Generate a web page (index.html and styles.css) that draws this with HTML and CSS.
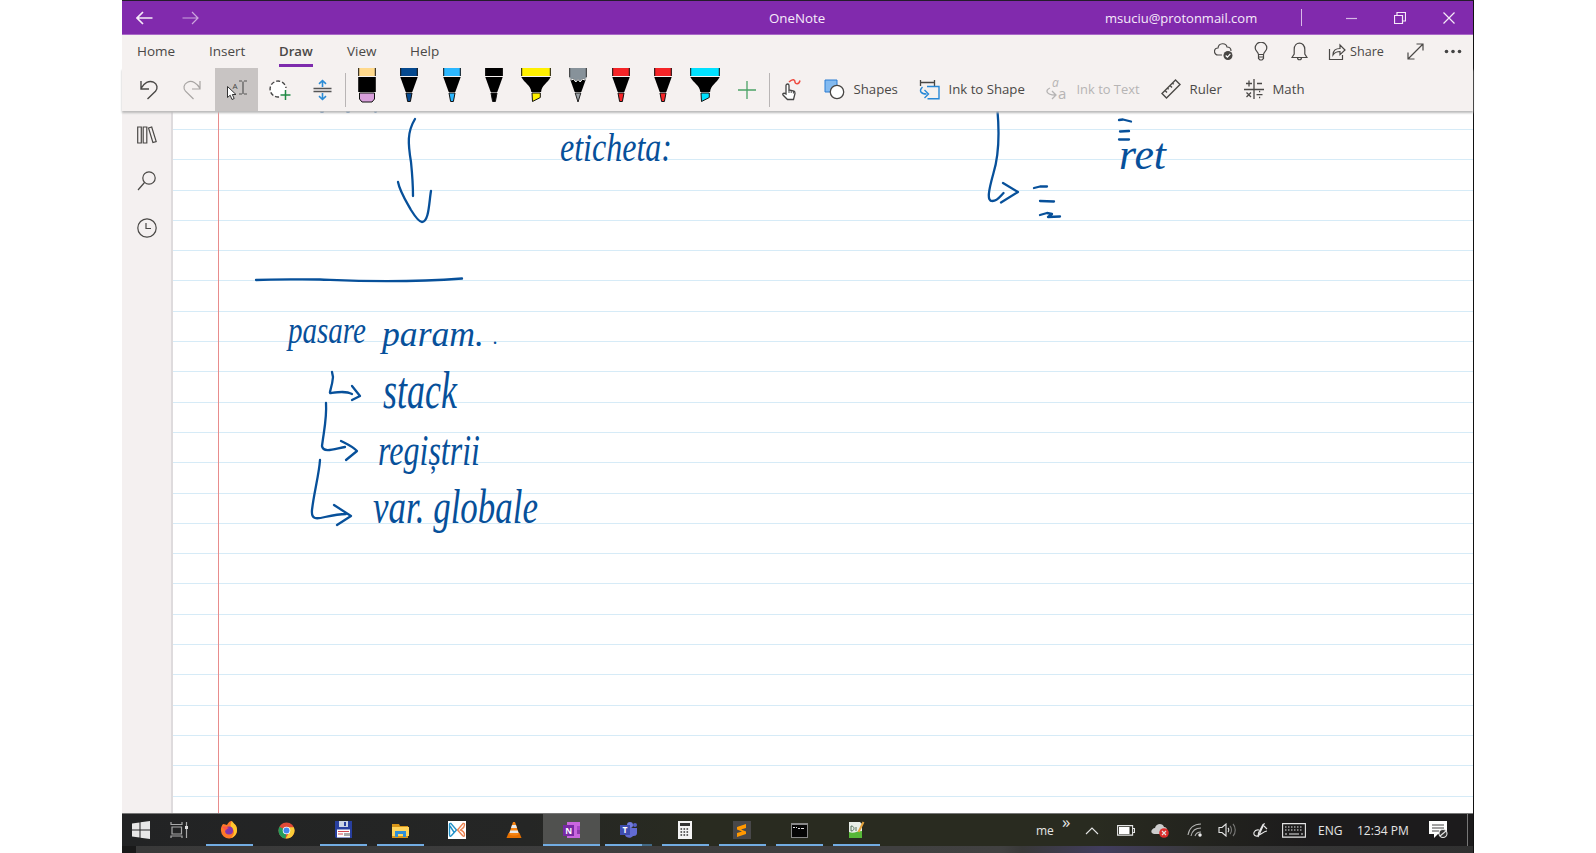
FILE: index.html
```html
<!DOCTYPE html>
<html lang="en">
<head>
<meta charset="utf-8">
<title>OneNote</title>
<link rel="stylesheet" href="styles.css">
</head>
<body>
<svg class="defs" width="0" height="0">
  <symbol id="pen" viewBox="0 0 18 35">
    <path d="M.3 0h17.4v8H.3z" fill="currentColor"/><path d="M.7 0v8M17.3 0v8" stroke="#111"/>
    <path d="M.3 9h17.4l-5.4 15H5.7z" fill="#000"/>
    <path d="M6 25h6l-1.6 8.5H7.6z" fill="currentColor" stroke="#111"/>
  </symbol>
  <symbol id="marker" viewBox="0 0 30 35">
    <path d="M.3 0h29.4v8H.3z" fill="currentColor"/><path d="M.7 0v8M29.3 0v8" stroke="#111"/>
    <path d="M.3 9h29.4c-3 6-9 8-9.600 15h-9.800C9.700 17 3.300 15 .3 9z" fill="#000"/>
    <path d="M11 25h8.300v4.500L11.500 33.500z" fill="currentColor" stroke="#111"/>
  </symbol>
</svg>
<div class="window">
  <header class="titlebar">
    <svg class="back" width="17" height="14" viewBox="0 0 17 14"><path d="M16.500 7H1M7 1 1 7l6 6"/></svg>
    <svg class="forward" width="17" height="14" viewBox="0 0 17 14"><path d="M.5 7H16M10 1l6 6-6 6"/></svg>
    <span class="app-name">OneNote</span>
    <span class="account">msuciu@protonmail.com</span>
    <i class="title-sep"></i>
    <svg class="minimise" width="11" height="12" viewBox="0 0 11 12"><path d="M0 6.500h11"/></svg>
    <svg class="restore" width="12" height="12" viewBox="0 0 12 12"><path d="M.5 3.500h8v8h-8zM3 3.500v-3h8.500V9h-3"/></svg>
    <svg class="close" width="12" height="12" viewBox="0 0 12 12"><path d="m.5.5 11 11m0-11-11 11"/></svg>
  </header>

  <nav class="tabs">
    <span class="tab home">Home</span>
    <span class="tab insert">Insert</span>
    <span class="tab draw">Draw</span>
    <span class="tab view">View</span>
    <span class="tab help">Help</span>
    <div class="tab-actions">
      <svg class="line sync" width="20" height="18" viewBox="0 0 20 18"><path d="M8 12H4a3.500 3.500 0 0 1 0-7c.7-5.500 8-5.500 9-1 3 0 4 1.500 4 4"/><circle cx="14" cy="12.500" r="4.500" fill="#484644" stroke="none"/><path d="m11.700 12.500 1.700 1.700 3-3.400" stroke="#fff"/></svg>
      <svg class="line bulb" width="14" height="19" viewBox="0 0 14 19"><path d="M4.500 12.500C4 9.500 1.200 9 1.200 6a5.500 5.500 0 0 1 11.600 0c0 3-2.800 3.500-3.300 6.500zM4.500 12.500v4l1.500 1.500h2l1.500-1.500v-4M4.500 15h5"/></svg>
      <svg class="line bell" width="17" height="19" viewBox="0 0 17 19"><path d="M1 15.500h15l-2.200-3.500V7.500c0-8.500-10.600-8.500-10.600 0V12zM6.500 15.500c0 3 4 3 4 0"/></svg>
      <svg class="line share" width="18" height="18" viewBox="0 0 18 18"><path d="M1.500 6v10.500h13V12M5 12c0-5 3-6.500 7-6.500V2l5 5-5 4.700V8.500c-3 0-5 .5-7 3.500z"/></svg>
      <span class="share-label">Share</span>
      <svg class="line expand" width="17" height="17" viewBox="0 0 17 17"><path d="m1 16 15-15M9.500 1H16v6.500M1 9.500V16h6.500"/></svg>
      <svg class="more" width="18" height="5" viewBox="0 0 18 5"><circle cx="2.500" cy="2.500" r="1.800"/><circle cx="9" cy="2.500" r="1.800"/><circle cx="15.500" cy="2.500" r="1.800"/></svg>
    </div>
  </nav>

  <div class="toolbar">
    <div class="tool edit"><svg class="line" width="20" height="22" viewBox="0 0 20 22"><path stroke-width="1.400" d="M2 2v8h8M2 9.500C5 4 10 1 14.500 3.200c4 2 4.500 6 2 9L8.500 20"/></svg></div>
    <div class="tool edit redo"><svg class="line" width="20" height="22" viewBox="0 0 20 22"><path d="M18 2v8h-8M18 9.500C15 4 10 1 5.500 3.200c-4 2-4.500 6-2 9L11.500 20"/></svg></div>
    <div class="tool select"><svg width="24" height="24" viewBox="0 0 24 24"><path d="M14 3h3m2 0h3M18 3.500v12.500M14 16h3m2 0h3" stroke="#555" stroke-width="1.200" fill="none"/><text x="7.500" y="11" font-size="8" fill="#444">A</text><path d="M2.500 8.500v11l2.700-2.300 1.800 4.300 2.200-1-1.900-4h3.700z" fill="#fff" stroke="#333"/></svg></div>
    <div class="tool edit"><svg width="22" height="22" viewBox="0 0 22 22"><circle cx="9" cy="10" r="7.800" fill="#fff"/><path d="M10 18a8 8 0 1 1 7-9" fill="none" stroke="#444" stroke-width="1.400" stroke-dasharray="4 2"/><path d="M16.500 11v10M11.500 16h10" stroke="#218a45" stroke-width="1.500"/></svg></div>
    <div class="tool edit"><svg width="19" height="22" viewBox="0 0 19 22"><path d="M.5 9.500h18M.5 12.500h18" stroke="#555" stroke-width="1.500"/><path d="M9.500 8V2M6 4.800 9.500 1.500 13 4.800M9.500 14v6M6 17.200l3.500 3.300 3.500-3.300" stroke="#2c8cd6" stroke-width="1.600" fill="none"/></svg></div>
    <i class="sep"></i>
    <div class="tool pen"><svg width="18" height="35" viewBox="0 0 18 35"><path d="M0 0h18v8H0z" fill="#ffd98c"/><path d="M.7 0v8M17.300 0v8" stroke="#111"/><path d="M.2 9h17.600v15H.2z"/><path d="M1.500 25h15v6l-2.500 3H4l-2.500-3z" fill="#d9a0dc" stroke="#111"/></svg></div>
    <div class="tool pen navy"><svg width="18" height="35"><use href="#pen"/></svg></div>
    <div class="tool pen sky"><svg width="18" height="35"><use href="#pen"/></svg></div>
    <div class="tool pen black"><svg width="18" height="35"><use href="#pen"/></svg></div>
    <div class="tool pen yellow"><svg width="30" height="35"><use href="#marker"/></svg></div>
    <div class="tool pen"><svg width="18" height="35" viewBox="0 0 18 35"><path d="M.3 9h17.400l-5.400 15H5.700z"/><path d="M.3 0h17.400v9l-2 2.500-2.200-1-2.300 3-2.200-2.500-2.200 2.500-2.200-3-2.200 1L.3 9z" fill="#87929a"/><path d="M.3 9.500 2.300 12l2.200-1 2.300 3L9 11.500l2.200 2.500 2.300-3 2.200 1 2-2.500" fill="none" stroke="#fff"/><path d="M.7 0v9M17.300 0v9" stroke="#333"/><path d="M6.200 25h5.600L9 34z" fill="#9aa0a5" stroke="#222"/></svg></div>
    <div class="tool pen red"><svg width="18" height="35"><use href="#pen"/></svg></div>
    <div class="tool pen red"><svg width="18" height="35"><use href="#pen"/></svg></div>
    <div class="tool pen aqua"><svg width="30" height="35"><use href="#marker"/></svg></div>
    <div class="tool pen add"><svg width="18" height="18" viewBox="0 0 18 18"><path d="M9 0v18M0 9h18" stroke="#4ba366" stroke-width="1.300"/></svg></div>
    <i class="sep"></i>
    <div class="tool touch"><svg width="21" height="23" viewBox="0 0 21 23"><path d="M8 4C12 0 14 2 14 4s4 3 5-1.500" stroke="#ee493e" stroke-width="1.500" fill="none"/><path d="M5 15V7.500c0-2 3-2 3 0V12l5 1.200c1 .5 1 1.300 1 2.300L12.500 21.500h-6L2 17c-1-1.500 1-2.500 3-1z" fill="#fff" stroke="#444" stroke-width="1.300"/><path d="M8 12v3m2.200-2.500V15m2.200-2v2.500" stroke="#444"/></svg></div>
    <div class="command shapes"><svg width="21" height="21" viewBox="0 0 21 21"><path d="M1 1h12v12H1z" fill="#83baf0" stroke="#2b7cd3"/><circle cx="13" cy="13" r="6.700" fill="#fff" stroke="#484644" stroke-width="1.300"/></svg><span>Shapes</span></div>
    <div class="command to-shape"><svg width="21" height="21" viewBox="0 0 21 21"><path d="M1 3.500h15M1.500 1v6M15.500 1v6" stroke="#484644" stroke-width="1.300"/><path d="M8 7.500h12v12.300H8.500M3.500 8c-4 4-1.500 7 4 7M5.500 11l4 4-4 4" fill="none" stroke="#2888d6" stroke-width="1.400"/></svg><span>Ink to Shape</span></div>
    <div class="command to-text"><svg width="22" height="26" viewBox="0 -3 22 26"><text x="6" y="8" font-size="12" font-style="italic">a</text><text x="12" y="20" font-size="15">a</text><path d="M4 9c-5 2-4 7 5 7M6 12l4 4-4 4" fill="none" stroke="#b6b4b4" stroke-width="1.300"/></svg><span>Ink to Text</span></div>
    <div class="command ruler"><svg class="line" width="20" height="20" viewBox="0 0 20 20"><path d="M1 14.500 14.500 1 19 5.500 5.500 19zM4 11.500l2 2m.5-4.500 1.200 1.200M9 6.500l2 2m.5-4.500 1.200 1.200" stroke-width="1.400"/></svg><span>Ruler</span></div>
    <div class="command math"><svg class="line" width="20" height="20" viewBox="0 0 20 20"><path d="M0 10.500h20M10 0v20M2 4.500h6M5 1.500v6M13 4.500h5M2.500 13.500l4.500 4.500m0-4.500L2.500 18M12.500 15.700h6" stroke-width="1.300"/><path d="M15 12.600h1.200M15 18.500h1.200" stroke-width="1.500"/></svg><span>Math</span></div>
  </div>

  <main class="body">
    <aside class="sidebar">
      <svg class="line" width="20" height="18" viewBox="0 0 20 18"><path d="M.7 1h3.600v16H.7zM6.200 1h3.600v16H6.200zM11.500 2l3.200-1 4.500 14.500-3.300 1z"/></svg>
      <svg class="line" width="20" height="20" viewBox="0 0 20 20"><circle cx="12" cy="7" r="6.200"/><path d="M7.500 11.500 1 19"/></svg>
      <svg class="line" width="20" height="20" viewBox="0 0 20 20"><circle cx="10" cy="10" r="9.200"/><path d="M9 5v5.500h5"/></svg>
    </aside>
    <section class="page">
      <svg class="ink" viewBox="173 111 1300 702" width="1300" height="702">
        <g class="stroke">
          <path d="M321 111.500h2M347 111.500h2M375 111.500h1"/>
          <path d="M415 119c-8 13-7 25-4 43 1 10 2 22 2 34"/>
          <path d="M398 182c2 10 8 19 13 28 5 8 8 12 11 12 7 0 7-20 9-31"/>
          <path d="M256 280c20-1 40-.5 64-.5 27 1 75 4 142-1"/>
          <path d="M997.500 111c2 23 2 42-4 62-5 18-7 28-1 28 5 0 7-4 11-8M1003 183l15 9-17 10.500"/>
          <path d="M1034 188l6-1.500h7M1040 201l14 .5M1040 215l7-2 5 1-4 3 12-.5"/>
          <path d="M1119 120l4-.5 8 2M1120 131.500l9-.500M1119 139.500h10"/>
          <path d="M332 372l1 5c-1 12-5 17-2 16 8-1 15-2 21 1M352 386l8 10-8 4"/>
          <path d="M326 403c1 15-2 27-4 43 1 8 15 2 23 1M341 441c6 3 11 5 16 10l-11 9"/>
          <path d="M320 460c-1 15-6 32-8 50-1 10 5 9 13 7 9-2 17-3 21-3M334 505l17 11-14 9"/>
        </g>
        <g class="writing">
          <text x="560" y="161" font-size="40" textLength="112" lengthAdjust="spacingAndGlyphs">eticheta:</text>
          <text x="1119" y="169" font-size="44" textLength="47" lengthAdjust="spacingAndGlyphs">ret</text>
          <text x="288" y="343" font-size="38" textLength="78" lengthAdjust="spacingAndGlyphs">pasare</text>
          <text x="382" y="346" font-size="36" textLength="102" lengthAdjust="spacingAndGlyphs">param.</text>
          <text x="493" y="344" font-size="20">.</text>
          <text x="383" y="408" font-size="52" textLength="74" lengthAdjust="spacingAndGlyphs">stack</text>
          <text x="378" y="465" font-size="44" textLength="102" lengthAdjust="spacingAndGlyphs">regiștrii</text>
          <text x="373" y="523" font-size="48" textLength="165" lengthAdjust="spacingAndGlyphs">var. globale</text>
        </g>
      </svg>
    </section>
  </main>

  <footer class="taskbar">
    <div class="app start"><svg width="18" height="18" viewBox="0 0 18 18"><path d="m0 2.500 7.500-1v7H0zM8.500 1.300 18 0v8.500H8.500zM0 9.500h7.500v7L0 15.500zM8.500 9.500H18V18l-9.500-1.300z" fill="#e7e7e7"/></svg></div>
    <div class="app start"><svg width="18" height="18" viewBox="0 0 18 18"><path d="M1 1v2.500h11V1M2 6h9.500v7H2zM1 17v-2h11v2M16.500 1v16" fill="none" stroke="#aaa" stroke-width="1.200"/><path d="M15 5h3v3h-3z" fill="#ddd"/></svg></div>
    <div class="apps">
      <div class="app open"><svg width="18" height="18" viewBox="0 0 18 18"><path d="M3 3c2 0 3 1 4 1 2-4 4-4 5-4v3c3-1 5 2 5 6a8 8 0 0 1-16 1c-.5-3 .5-5 2-7z" fill="#ff7828"/><path d="M12 0c1 2 5 4 5 9 0 4-3 7-6 8 4-4 4-8 0-11-1-2 0-4 1-6z" fill="#ffc72e"/><circle cx="9" cy="9.500" r="4" fill="#8435ad"/><path d="M2 6c3-1 5 0 7 1-2 1-3 1-3 3" fill="#ff5648"/></svg></div>
      <div class="app"><svg width="17" height="17" viewBox="0 0 18 18"><circle cx="9" cy="9" r="8.500" fill="#df4937"/><path d="M1.500 5 9 9l-1 8.500A8.500 8.500 0 0 1 1.500 5z" fill="#249c5b"/><path d="M9 5.500h7.700A8.500 8.500 0 0 1 8 17.500l4-7z" fill="#fbcd38"/><circle cx="9" cy="9" r="4" fill="#fff"/><circle cx="9" cy="9" r="3.200" fill="#4487ef"/></svg></div>
      <div class="app open"><svg width="17" height="18" viewBox="0 0 17 18"><path d="M0 0h17v17H1l-1-1z" fill="#283f9e"/><path d="M4 0h9v6H4z" fill="#ccd4e5"/><path d="M9 1h2v4H9z" fill="#283f9e"/><path d="M2 8.500h13v8H2z" fill="#fff"/><path d="M3 10.500h11M3 13h5" stroke="#d54850"/><path d="M10 12v3m2-3v3m2-3v3" stroke="#555"/></svg></div>
      <div class="app open"><svg width="17" height="17" viewBox="0 0 17 17"><path d="M0 2h7l1 2h8v12H0z" fill="#d89518"/><path d="M0 5h17v9H0z" fill="#ffd45c"/><path d="M3 15V9h11v6h-3v-3H6v3z" fill="#2f8fd8"/></svg></div>
      <div class="app"><svg width="18" height="18" viewBox="0 0 18 18"><path d="M0 0h18v18H0z" fill="#fff"/><path d="M8.500 9 3 2.500C1.500 2 1.500 3 1.500 4v9c0 3 1 2.500 2 1.500L8.500 9zM2 5l4.500 7" fill="none" stroke="#2291c8" stroke-width="1.400"/><path d="M9.500 9 15 2.500c1.500-.5 1.500.5 1.500 1.500 0 3-3 4-4 5 3 1 4 3 4 5 0 2-1 1.500-2 .5z" fill="none" stroke="#eb8452" stroke-width="1.400"/></svg></div>
      <div class="app"><svg width="16" height="18" viewBox="0 0 16 18"><path d="M2.500 12h11l2 5H.5z" fill="#e67000"/><path d="m7 1h2l4 12c-2 2-8 2-10 0z" fill="#f58313"/><path d="M6 4h4l1 3H5zM4.200 9.500h7.600l.8 2.500H3.400z" fill="#e8e8e8"/></svg></div>
      <div class="app active"><svg width="19" height="18" viewBox="0 0 19 18"><path d="M5 1h13v16H5z" fill="#c966df"/><path d="M15 5h3v4h-3z" fill="#a747c8"/><path d="M15 9h3v4h-3z" fill="#8e38ad"/><path d="M1 4h11v11H1z" fill="#7829a4"/><text x="3.200" y="12.500" font-size="8.500" font-weight="bold" fill="#fff">N</text></svg></div>
      <div class="app open grouped"><svg width="19" height="18" viewBox="0 0 19 18"><circle cx="11" cy="4" r="3" fill="#717be2"/><circle cx="16" cy="4" r="2" fill="#5761c6"/><path d="M6 7h12v5c0 3-3 3-4 3-2 3-7 2-8-1z" fill="#626bd3"/><path d="M1 4h10v10H1z" fill="#3f4db0"/><text x="3.400" y="12" font-size="8.500" font-weight="bold" fill="#fff">T</text></svg></div>
      <div class="app open"><svg width="14" height="18" viewBox="0 0 14 18"><path d="M0 0h14v18H0z" fill="#f4f4f4"/><path d="M2 2h10v3H2z" fill="#333"/><path d="M2.500 8h9M2.500 11h9M2.500 14h9" stroke="#333" stroke-width="1.600" stroke-dasharray="1.600 1.400"/></svg></div>
      <div class="app open"><svg width="18" height="18" viewBox="0 0 18 18"><path d="M0 0h18v18H0z" fill="#48484a"/><path d="m4 6 9-3v4L8 8.500l5 2V13l-9 3v-4l5-1.500-5-2z" fill="#ff9800"/></svg></div>
      <div class="app open"><svg width="17" height="15" viewBox="0 0 17 15"><path d="M0 0h17v15H0z" fill="#888"/><path d="M1 2h15v12H1z" fill="#050505"/><path d="M2 4.500h2m1 0h1M7 5.500h2m1 0h3" stroke="#ddd"/></svg></div>
      <div class="app open"><svg width="17" height="18" viewBox="0 0 17 18"><path d="M1 1h11l2 2v14H1z" fill="#e9efe9"/><path d="M1 11c5 2 8-1 13-1v7H1z" fill="#56b737"/><path d="M3 5v5m0-5c4 0 4 5 0 5M8 6v4" fill="none" stroke="#54735b"/><path d="m15.500 1-5 10" stroke="#e3a23b" stroke-width="2"/></svg></div>
    </div>
    <div class="tray">
      <span class="me">me</span>
      <span class="chevrons">»</span>
      <svg class="t-up" width="14" height="9" viewBox="0 0 14 9"><path d="m1 8 6-6 6 6"/></svg>
      <svg class="t-battery" width="18" height="11" viewBox="0 0 18 11"><path d="M.6.6h15v9.500H.6zM16 3.500h1.500v4H16"/><path d="M2 2h10.500v7H2z" fill="#fff" stroke="none"/></svg>
      <svg class="t-cloud" width="18" height="15" viewBox="0 0 18 15"><path d="M3 11c-5-1-2-6 1-6 1-5 8-5 9-1 4 0 4 6 1 7z" fill="#ccc" stroke="none"/><circle cx="13" cy="10" r="4.800" fill="#dc2d2b" stroke="none"/><path d="m11 8 4 4m0-4-4 4"/></svg>
      <svg class="t-wifi" width="15" height="14" viewBox="0 0 15 14"><g opacity=".75"><path d="M1 12C2 5 7 1 14 1M4 13c1-5 4-8 10-8M8 13c1-3 3-4 6-4"/></g><circle cx="13" cy="12" r="1.200" fill="#fff"/></svg>
      <svg class="t-sound" width="18" height="14" viewBox="0 0 18 14"><path d="M1 4.500h3L8 1v12L4 9.500H1z"/><path d="M10 5c1 1 1 3 0 4"/><path d="M12 3c2 2 2 6 0 8m3-10c3 3 3 9 0 12" opacity=".45"/></svg>
      <svg class="t-pen" width="16" height="15" viewBox="0 0 16 15"><path d="M11 1 6 12l-1 2 .5-4L10 1.500zM6 7C1 6-1 12 3 13c3 1 7-5 11-5M11 3l3 3"/></svg>
      <svg class="t-keys" width="24" height="15" viewBox="0 0 24 15"><path d="M.6.600h22.800v13.500H.6z"/><path d="M3 4h18M3 7h18" stroke-dasharray="1.500 1.500"/><path d="M3 11h2m2 0h10m2 0h2"/></svg>
      <span class="lang">ENG</span>
      <span class="clock">12:34 PM</span>
      <svg class="t-note" width="19" height="18" viewBox="0 0 19 18"><path d="M0 0h18v13H9l-4 4v-4H0z" fill="#fff" stroke="none"/><path d="M3 4h12M3 7h12M3 10h7" stroke="#444"/><circle cx="14" cy="12.500" r="4" fill="#333"/><path d="m11 15 6-5"/></svg>
      <i class="desktop-edge"></i>
    </div>
  </footer>
  <div class="bottom-strip"></div>
</div>
</body>
</html>
```

FILE: styles.css
```css
* { box-sizing: border-box; }
body { margin: 0; background: #fff; font-family: "Open Sans", "Noto Sans", sans-serif; font-size: 13.5px; color: #4a4846; overflow: hidden; }
svg { display: block; flex: none; }
.defs { position: absolute; }
.window { width: 1352px; height: 853px; margin-left: 122px; border-top: 1px solid #241c2b; border-right: 1px solid #111; display: flex; flex-direction: column; }
.line { fill: none; stroke: #4a4846; stroke-width: 1.2; }
span { white-space: nowrap; }

.titlebar { height: 34px; flex: none; background: #812aad; display: flex; align-items: center; color: #f6eafa; border-bottom: 1px solid #a968c7; }
.titlebar svg { fill: none; stroke: #f5eaf8; stroke-width: 1.2; }
.back { margin-left: 14px; }
.back path { stroke-width: 1.7; }
.forward { margin-left: 29px; opacity: .65; }
.app-name { margin-left: 570px; width: 56px; font-size: 13.3px; }
.account { margin-left: 280px; width: 153px; font-size: 13px; }
.title-sep { width: 1px; height: 17px; margin-left: 43px; background: #d9bae8; }
.minimise { margin-left: 44px; opacity: .75; }
.restore { margin-left: 37px; }
.close { margin-left: 37px; }

.tabs { height: 33px; flex: none; background: #f5f1f0; display: flex; align-items: stretch; padding-left: 15px; line-height: 33px; font-size: 13.5px; }
.home { width: 72px; }
.insert { width: 70px; }
.draw { width: 34px; height: 32px; margin-right: 34px; font-weight: 600; border-bottom: 3px solid #7e2bad; font-size: 13.2px; }
.view { width: 63px; }
.help { width: 30px; }
.tab-actions { display: flex; align-items: center; margin-left: 774px; }
.bulb { margin-left: 20px; }
.bell { margin-left: 23px; }
.share { margin-left: 20px; }
.share-label { margin-left: 4px; width: 35px; font-size: 12.6px; }
.expand { margin-left: 22px; }
.more { margin-left: 20px; fill: #444; }

.toolbar { height: 43px; flex: none; background: #f5f1f0; display: flex; align-items: center; padding-left: 5px; box-shadow: 0 2px 2px #bbb; z-index: 1; }
.toolbar text { font-family: "Open Sans", sans-serif; }
.tool { height: 43px; flex: none; display: flex; align-items: center; justify-content: center; }
.edit { width: 43px; }
.redo { width: 44px; }
.redo svg { opacity: .45; }
.select { width: 43px; margin-left: 1px; background: #c8c4c3; }
.sep { width: 1px; height: 34px; flex: none; background: #b9b5b5; }
.sep:first-of-type { margin-left: 1px; }
.pen { width: 42.25px; align-items: flex-start; }
.navy { color: #05498f; }
.sky { color: #2bb7ff; }
.black { color: #000; }
.yellow { color: #fff000; }
.red { color: #f52427; }
.aqua { color: #00e1ff; }
.add { align-items: center; }
.touch { width: 43px; padding-left: 1px; }
.command { display: flex; align-items: center; flex: none; gap: 9px; font-size: 13.2px; padding-bottom: 1px; }
.shapes { width: 95px; margin-left: 11px; }
.to-shape { width: 127px; }
.to-text { width: 115px; color: #b6b4b4; fill: #b6b4b4; font-size: 12.9px; padding-bottom: 2px; }
.ruler { width: 83px; }

.body { flex: 1; min-height: 0; display: flex; }
.sidebar { width: 51px; flex: none; background: #f4f0f0; border-right: 2px solid #dedbdd; display: flex; flex-direction: column; align-items: center; gap: 27px; padding-top: 15px; }
.page { position: relative; flex: 1; overflow: hidden; background: linear-gradient(90deg, transparent 45px, #e88c8c 45px, #e88c8c 46px, transparent 46px), repeating-linear-gradient(#fff 0 29.3px, #d6ebf7 29.3px 30.3px) 0 -11.4px / 100% 740px, #fff; }
.ink { position: absolute; inset: 0; }
.stroke { fill: none; stroke: #07509a; stroke-width: 2.3; stroke-linecap: round; stroke-linejoin: round; }
.writing { font-family: "Liberation Serif", serif; font-style: italic; fill: #07509a; }

.taskbar { height: 33px; flex: none; display: flex; background: linear-gradient(90deg, #222324, #252625 30%, #292b20 43%, #292b20 72%, #1c1b1c 88%); border-top: 1px solid #777; }
.app { width: 57px; height: 32px; display: flex; align-items: center; justify-content: center; position: relative; }
.app svg { margin-right: 1px; }
.start { width: 38px; }
.apps { display: flex; margin-left: 3px; }
.open::after, .active::after { content: ""; position: absolute; left: 5px; right: 5px; bottom: 0; height: 2px; background: #72ace2; }
.active { background: #50514f; }
.active::after { left: 0; right: 0; }
.grouped::after { background: linear-gradient(90deg, #72ace2 37px, #426985 37px); }
.tray { display: flex; align-items: center; color: #e5e5e5; margin-left: 151px; }
.tray svg { fill: none; stroke: #e5e5e5; stroke-width: 1.1; }
.me { width: 18px; font-size: 12px; }
.chevrons { width: 9px; margin-left: 8px; margin-top: -17px; font-size: 17px; }
.t-up { margin-left: 14px; }
.t-battery { margin-left: 18px; }
.t-cloud { margin-left: 16px; }
.t-wifi { margin-left: 18px; }
.t-sound { margin-left: 16px; }
.t-pen { margin-left: 17px; }
.t-keys { margin-left: 13px; }
.lang { margin-left: 12px; width: 24px; font-size: 12px; }
.clock { margin-left: 15px; width: 53px; font-size: 12px; }
.t-note { margin-left: 19px; }
.desktop-edge { width: 1px; height: 32px; background: #777; margin-left: 19px; }
.bottom-strip { height: 7px; flex: none; background: linear-gradient(90deg, #191919 14px, #393939 14px, #414141 880px, #393939 900px, #413d5d 980px, #393939 1080px, #303030); }
```
